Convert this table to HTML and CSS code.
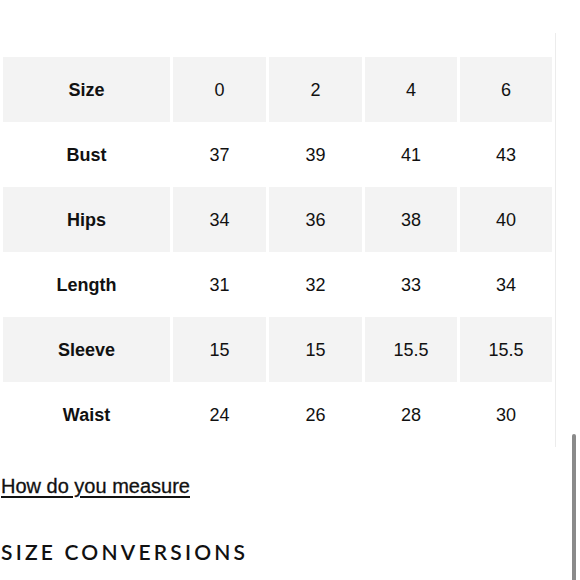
FILE: index.html
```html
<!DOCTYPE html>
<html>
<head>
<meta charset="utf-8">
<link rel="stylesheet" href="styles.css">
</head>
<body>
<div class="page">
  <div class="chart-wrap">
    <table class="chart">
      <colgroup>
        <col class="c-label"><col class="c-num"><col class="c-num"><col class="c-num2"><col class="c-num2">
      </colgroup>
      <tr class="shade"><th>Size</th><td>0</td><td>2</td><td>4</td><td>6</td></tr>
      <tr><th>Bust</th><td>37</td><td>39</td><td>41</td><td>43</td></tr>
      <tr class="shade"><th>Hips</th><td>34</td><td>36</td><td>38</td><td>40</td></tr>
      <tr><th>Length</th><td>31</td><td>32</td><td>33</td><td>34</td></tr>
      <tr class="shade"><th>Sleeve</th><td>15</td><td>15</td><td>15.5</td><td>15.5</td></tr>
      <tr><th>Waist</th><td>24</td><td>26</td><td>28</td><td>30</td></tr>
    </table>
  </div>
  <a class="measure" href="#">How do you measure</a>
  <h2 class="conv">SIZE CONVERSIONS</h2>
</div>
<div class="scrollbar"></div>
</body>
</html>
```
FILE: styles.css
```css
html, body {
  margin: 0;
  padding: 0;
  background: #fff;
}
body {
  font-family: "Liberation Sans", Arial, sans-serif;
  color: #111;
  height: 580px;
  overflow: hidden;
}
.page {
  padding-top: 33px;
}
.chart-wrap {
  width: 555px;
  border-right: 1px solid #ececec;
  padding-top: 24px;
}
.chart {
  width: 555px;
  border-collapse: separate;
  border-spacing: 3px 0;
  table-layout: fixed;
}
.c-label { width: 167px; }
.c-num { width: 93px; }
.c-num2 { width: 92px; }
.chart th, .chart td {
  height: 63px;
  padding: 2px 0 0;
  text-align: center;
  vertical-align: middle;
  font-size: 18px;
  color: #111;
}
.chart th { font-weight: bold; }
.chart td { font-weight: normal; }
.shade th, .shade td { background: #f3f3f3; }
.measure {
  display: inline-block;
  margin-top: 27px;
  margin-left: 1px;
  font-size: 20px;
  line-height: 24px;
  color: #111;
  text-decoration: underline;
  text-decoration-thickness: 2px;
  text-underline-offset: 3px;
  -webkit-text-stroke: 0.3px #111;
}
.conv {
  margin: 42px 0 0 1px;
  font-family: "Lato", sans-serif;
  font-weight: 600;
  font-size: 21px;
  line-height: 24px;
  letter-spacing: 3.2px;
  color: #111;
}
.scrollbar {
  position: fixed;
  left: 572px;
  top: 434px;
  width: 4px;
  height: 160px;
  border-radius: 2px;
  background: #8a8a8a;
}
```
